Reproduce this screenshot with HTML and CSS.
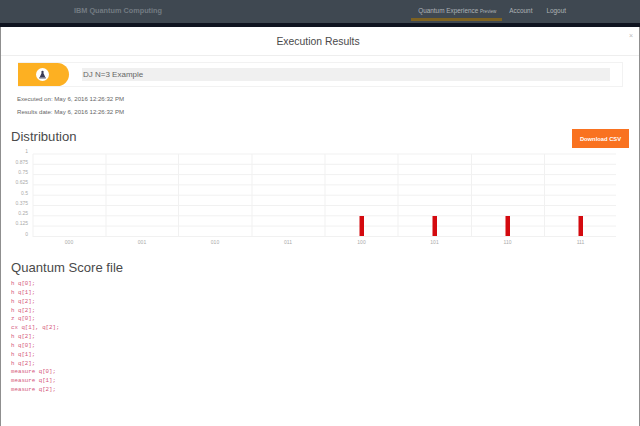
FILE: index.html
```html
<!DOCTYPE html>
<html lang="en">
<head>
<meta charset="utf-8">
<title>Execution Results</title>
<link rel="stylesheet" href="styles.css">
</head>
<body>
<nav class="nav">
  <span class="brand">IBM Quantum Computing</span>
  <div class="links">
    <span class="link active">Quantum Experience <small>Preview</small></span>
    <span class="link">Account</span>
    <span class="link">Logout</span>
  </div>
</nav>
<main class="modal">
  <header class="modal-head">
    <h1>Execution Results</h1>
    <span class="close">×</span>
  </header>
  <section class="name-row">
    <div class="pill">
      <span class="pill-icon">
        <svg viewBox="0 0 12 12" width="12" height="12"><circle cx="6" cy="2.6" r="1.6" fill="#3b3b55"/><path d="M4.8 4h2.4l2.4 5.4H2.4z" fill="#3b3b55"/><rect x="1.6" y="9.8" width="8.8" height="1.4" fill="#3b3b55"/></svg>
      </span>
    </div>
    <div class="name-field">DJ N=3 Example</div>
  </section>
  <p class="meta first">Executed on: May 6, 2016 12:26:32 PM</p>
  <p class="meta">Results date: May 6, 2016 12:26:32 PM</p>
  <div class="dist-head">
    <h2>Distribution</h2>
    <span class="csv">Download CSV</span>
  </div>
  <svg class="chart" viewBox="0 0 640 94" width="640" height="94">
    <g class="grid">
      <line x1="33" x2="616" y1="5" y2="5"/><line x1="33" x2="616" y1="15.3" y2="15.3"/>
      <line x1="33" x2="616" y1="25.6" y2="25.6"/><line x1="33" x2="616" y1="35.9" y2="35.9"/>
      <line x1="33" x2="616" y1="46.2" y2="46.2"/><line x1="33" x2="616" y1="56.5" y2="56.5"/>
      <line x1="33" x2="616" y1="66.8" y2="66.8"/><line x1="33" x2="616" y1="77.1" y2="77.1"/>
      <line x1="33" x2="616" y1="87.5" y2="87.5"/>
      <line x1="33" x2="33" y1="5" y2="88"/><line x1="106" x2="106" y1="5" y2="88"/>
      <line x1="178.5" x2="178.5" y1="5" y2="88"/><line x1="252" x2="252" y1="5" y2="88"/>
      <line x1="325" x2="325" y1="5" y2="88"/><line x1="398" x2="398" y1="5" y2="88"/>
      <line x1="471.5" x2="471.5" y1="5" y2="88"/><line x1="544.5" x2="544.5" y1="5" y2="88"/>
    </g>
    <g class="ylab">
      <text x="28" y="4">1</text><text x="28" y="14.5">0.875</text><text x="28" y="25">0.75</text>
      <text x="28" y="35">0.625</text><text x="28" y="45.5">0.5</text><text x="28" y="55.5">0.375</text>
      <text x="28" y="65.5">0.25</text><text x="28" y="76">0.125</text><text x="28" y="87">0</text>
    </g>
    <g class="xlab">
      <text x="69" y="95">000</text><text x="142" y="95">001</text><text x="215" y="95">010</text>
      <text x="288" y="95">011</text><text x="361.5" y="95">100</text><text x="434.5" y="95">101</text>
      <text x="507.5" y="95">110</text><text x="580.5" y="95">111</text>
    </g>
    <g class="bars">
      <rect x="359.5" y="67" width="4.5" height="20"/><rect x="432.5" y="67" width="4.5" height="20"/>
      <rect x="505.5" y="67" width="4.5" height="20"/><rect x="578.5" y="67" width="4.5" height="20"/>
    </g>
  </svg>
  <h2 class="score-title">Quantum Score file</h2>
  <pre class="code">h q[0];
h q[1];
h q[2];
h q[2];
z q[0];
cx q[1], q[2];
h q[2];
h q[0];
h q[1];
h q[2];
measure q[0];
measure q[1];
measure q[2];</pre>
</main>
</body>
</html>
```
FILE: styles.css
```css
* { box-sizing: border-box; }
html, body { margin: 0; height: 426px; overflow: hidden; }
body { background: #0f1420; font-family: "Liberation Sans", Arial, sans-serif; display: flex; flex-direction: column; }
.nav { height: 23px; flex: none; background: #3f4851; display: flex; align-items: center; padding: 0 0 3px 74px; margin-bottom: 4px; color: #a3a9ae; font-size: 7px; }
.brand { font-size: 7.3px; font-weight: 700; color: #737b82; }
.links { margin-left: auto; display: flex; align-items: center; margin-right: 74px; color: #aeb3b7; font-size: 6.4px; }
.link { position: relative; }
.link small { font-size: 4.6px; }
.active { padding: 0 6px 0 7px; margin-right: 7px; }
.link + .link { margin-right: 14px; }
.link:last-child { margin-right: 0; }
.active::after { content: ""; position: absolute; left: 0; right: 0; top: 11px; height: 3px; background: #7d6222; }
.modal { flex: 1; background: #fff; border-left: 1px solid #8f8f8f; border-right: 1px solid #8f8f8f; min-width: 0; position: relative; }
.modal-head { height: 29px; border-bottom: 1px solid #eee; display: flex; align-items: center; justify-content: center; }
h1 { margin: 0; font-size: 10.4px; font-weight: 400; color: #4a4a4a; position: relative; left: -2px; }
.close { position: absolute; right: 6px; top: 5px; font-size: 7px; color: #bbb; }
.name-row { margin: 6px 16px 0 17px; height: 25px; border: 1px solid #f2f2f2; display: flex; align-items: center; }
.pill { width: 51px; height: 23px; background: #fdb022; border-radius: 0 12px 12px 0; display: flex; align-items: center; padding-left: 18px; margin-left: -1px; }
.pill-icon { width: 13px; height: 13px; border-radius: 50%; background: #fff; display: flex; align-items: center; justify-content: center; }
.pill-icon svg { width: 9px; height: 9px; }
.name-field { margin-left: 13px; width: 528px; height: 13px; background: #f0f0f0; font-size: 8px; color: #666; line-height: 13px; padding-left: 1px; }
.meta { margin: 6px 0 0 16px; font-size: 6.1px; line-height: 7px; color: #666; }
.meta.first { margin-top: 8px; }
.dist-head { display: flex; justify-content: space-between; align-items: flex-start; margin: 14px 10px 0 10px; height: 20px; }
h2 { margin: 0; font-size: 13.1px; font-weight: 400; color: #4a4a4a; line-height: 16px; }
.csv { width: 57px; height: 19px; background: #f97220; color: #fff; font-size: 5.8px; font-weight: 700; display: flex; align-items: center; justify-content: center; }
.chart { display: block; margin: 0 0 0 -1px; overflow: visible; }
.grid line { stroke: #f1f1f1; stroke-width: 1; }
.ylab text { font-size: 5px; fill: #aaa; text-anchor: end; }
.xlab text { font-size: 5px; fill: #aaa; text-anchor: middle; }
.bars rect { fill: #d40a0f; }
.score-title { margin: 17px 0 0 10px; }
.code { margin: 4px 0 0 10px; font-family: "Liberation Mono", monospace; font-size: 5.77px; line-height: 8.85px; color: #d4567a; }
```
